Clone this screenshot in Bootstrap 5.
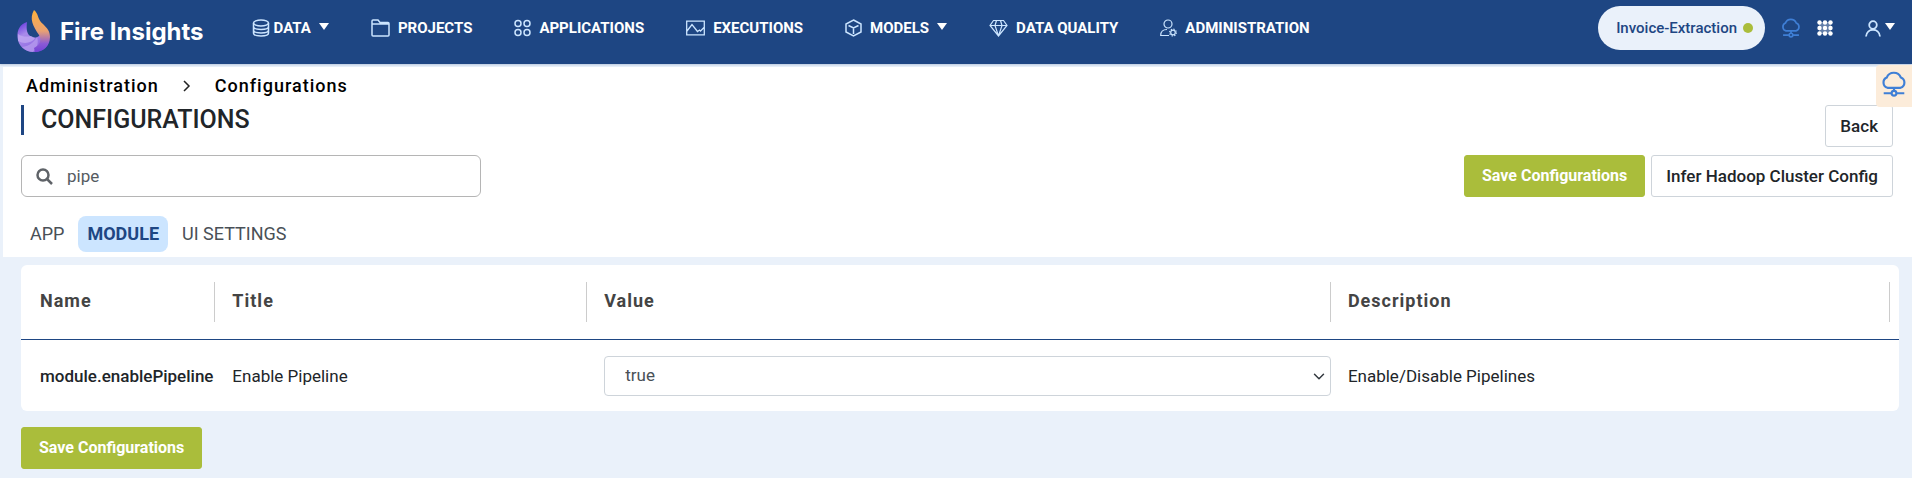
<!DOCTYPE html>
<html lang="en">
<head>
<meta charset="utf-8">
<meta name="viewport" content="width=device-width, initial-scale=1">
<title>Fire Insights - Configurations</title>
<link rel="stylesheet" href="https://cdn.jsdelivr.net/npm/bootstrap@5.3.0/dist/css/bootstrap.min.css">
<style>
  body { background: #eaf1fa; color: #212529; font-family: Roboto, "Liberation Sans", sans-serif; font-size: 17px; line-height: 24px; }
  a { color: inherit; text-decoration: none; }
  .topbar { background: #1e4683; height: 64px; color: #fff; box-shadow: 0 1px 2px rgba(30, 70, 131, .25); }
  .brand-name { font-family: Inter, "Open Sans", sans-serif; font-weight: 700; font-size: 24px; line-height: 32px; }
  .main-menu { gap: 42px; margin-left: 48px; font-size: 15px; font-weight: 700; line-height: 24px; }
  .menu-icon { fill: none; stroke: #cce5ff; flex: none; }
  .caret { width: 0; height: 0; border: 5px solid transparent; border-top: 7px solid #fff; border-bottom: 0; margin-bottom: 4px; }
  .account-tools { margin-right: 17px; }
  .project-pill { height: 44px; border-radius: 22px; background: #eaf1fa; color: #1e4683; font-size: 15px; font-weight: 500; padding: 0 12px 0 18px; border: 0; gap: 6px; }
  .status-dot { width: 10px; height: 10px; background: #aabd3b; }
  .page-head { margin: 3px 0 0 3px; padding: 7px 19px 5px 18px; background: #fff; }
  .crumbs { font-size: 18px; font-weight: 500; letter-spacing: 1px; color: #000; padding-left: 5px; gap: 24px; }
  .page-title { font-size: 25px; line-height: 30px; font-weight: 500; border-left: 3px solid #1e4683; padding-left: 17px; }
  .title-row { margin-top: 7px; height: 42px; }
  .tool-row { margin-top: 8px; }
  .act { height: 42px; border-radius: 3px; font-size: 17px; font-weight: 500; padding: 0 14px; line-height: 24px; }
  .act-save { background: #aabd3b; color: #fff; border-color: #aabd3b; font-weight: 700; font-size: 16px; padding: 0 17px; }
  .act-plain { background: #fff; color: #212529; border-color: #ced4da; }
  .search-box { width: 460px; height: 42px; border: 1px solid #b5b5b5; border-radius: 6px; padding: 0 14px; gap: 14px; }
  .search-box input { border: 0; outline: 0; color: #555b61; flex: 1; font-size: 17px; background: none; padding: 0; }
  .view-tabs { margin-top: 19px; font-size: 18px; color: #495057; gap: 5px; }
  .view-tabs a { padding: 6px 9px; border-radius: 8px; }
  .view-tabs a.current { background: #cce5ff; color: #1e4683; font-weight: 700; }
  .content-area { padding: 8px 13px 9px 18px; margin-left: 3px; }
  .config-card { background: #fff; border-radius: 6px; }
  .config-table { table-layout: fixed; width: 100%; white-space: nowrap; border-collapse: separate; border-spacing: 0; }
  .config-table thead th { padding: 17px 0; border-bottom: 1px solid #1e4683; }
  .head-cell { height: 40px; padding: 7px 0 9px 17px; border-right: 1px solid #ccc; font-size: 18px; font-weight: 700; letter-spacing: 1px; color: #444; }
  .config-table th:first-child .head-cell { padding-left: 19px; }
  .config-table th:last-child .head-cell { margin-right: 9px; }
  .config-table tbody th, .config-table tbody td { padding: 16px 0 15px 17px; text-align: left; font-weight: 400; }
  .config-table tbody th { font-weight: 500; padding-left: 19px; }
  .config-table .value-select { height: 40px; border: 1px solid #ced4da; border-radius: 4px; font-size: 17px; color: #495057; padding: 0 20px; background-position: right 5px center; background-size: 12px 13px; }
  .cloud-tab { position: absolute; top: 65px; right: 0; width: 36px; height: 42px; background: #fcecda; border: 0; border-radius: 4px 0 0 4px; }
</style>
</head>
<body>
<svg class="d-none" aria-hidden="true">
  <symbol id="cloud" viewBox="0 0 24 24">
    <path d="M6 15.500a5 5 0 0 1-.7-9.400A7 7 0 0 1 18.300 6a5 5 0 0 1-.3 9.500zM12 15.500v3M2.500 20.500h7M14.500 20.500h7"/>
    <circle cx="12" cy="20.500" r="2.200"/>
  </symbol>
</svg>

<header class="topbar d-flex align-items-center position-relative">
  <a href="#" class="d-flex align-items-center ms-3 text-white">
    <svg width="36" height="44" viewBox="0 0 36 44">
      <defs>
        <linearGradient id="flame" x1="0" y1="0" x2="0" y2="1"><stop offset="0" stop-color="#ffb13b"/><stop offset=".5" stop-color="#e9a173"/><stop offset=".8" stop-color="#8b5ad6"/><stop offset="1" stop-color="#7342d8"/></linearGradient>
        <linearGradient id="swirl" x1="0" y1="0" x2=".6" y2="1"><stop offset="0" stop-color="#5b2bdc"/><stop offset=".4" stop-color="#a98bea"/><stop offset="1" stop-color="#8a63e0"/></linearGradient>
      </defs>
      <path fill="url(#swirl)" d="M11 12C4 14 1 20 1.500 27 2 36 9 42 18 42c7 0 12-4 14-8l-8-9c-3 3-5 3-8 2-5-2-6-7-5-15z"/>
      <path fill="#c3adf2" opacity=".7" d="M2 24c4 3 9 3 13 2l4 2c-2 4-10 7-17 3z"/>
      <path fill="#b9a0f0" opacity=".7" d="M6 37c8-1 12-5 15-10 2 6 0 11-4 15-4 0-8-2-11-5z"/>
      <path fill="url(#flame)" d="M18 0c5 4 3 9 9 14 4 4 7 7 7 13 0 9-7 15-15 15l-1-4c6-3 8-8 5-13-6-9-10-16-5-25z"/>
    </svg>
    <span class="brand-name ms-2">Fire Insights</span>
  </a>

  <nav class="main-menu d-flex align-items-center mb-2" aria-label="Main">
    <a href="#" class="d-flex align-items-center gap-1">
      <svg class="menu-icon" width="18" height="18" viewBox="0 0 18 18" stroke-width="1.500"><ellipse cx="9" cy="4" rx="7.500" ry="3"/><path d="M1.500 4v10c0 4 15 4 15 0V4M1.500 7.500c0 4 15 4 15 0M1.500 11c0 4 15 4 15 0"/></svg>
      DATA <span class="caret ms-1"></span></a>
    <a href="#" class="d-flex align-items-center gap-2">
      <svg class="menu-icon" width="19" height="18" viewBox="0 0 19 18" stroke-width="1.500"><path d="M1 16V2q0-1 1-1h5l2 2.500h8q1 0 1 1V16q0 1-1 1H2q-1 0-1-1zM1 5h17"/></svg>
      PROJECTS</a>
    <a href="#" class="d-flex align-items-center gap-2">
      <svg class="menu-icon" width="17" height="18" viewBox="0 0 17 18" stroke-width="1.500"><circle cx="4" cy="4.500" r="3"/><circle cx="13" cy="4.500" r="3"/><circle cx="4" cy="13.500" r="3"/><circle cx="13" cy="13.500" r="3"/></svg>
      APPLICATIONS</a>
    <a href="#" class="d-flex align-items-center gap-2">
      <svg class="menu-icon" width="19" height="16" viewBox="0 0 19 16" stroke-width="1.300"><path d="M.7 1.200h17.600v13.600H.7zM1 11l5-6.500 5.500 7 2-1.500 1 1 3.500-3.500"/></svg>
      EXECUTIONS</a>
    <a href="#" class="d-flex align-items-center gap-2">
      <svg class="menu-icon" width="17" height="18" viewBox="0 0 17 18" stroke-width="1.500"><path d="M8.500 1 16 5v8l-7.500 4L1 13V5zM3.500 6.500l5 2.500 5-2.500M8.500 9v6"/></svg>
      MODELS <span class="caret"></span></a>
    <a href="#" class="d-flex align-items-center gap-2">
      <svg class="menu-icon" width="19" height="18" viewBox="0 0 19 18" stroke-width="1.200"><path d="M4.500 1.500h10L18 6.500l-8.500 10.500L1 6.500zM1 6.500h17M6 6.500l3.500 10.500 3.500-10.500M6 6.500l1.500-5M13 6.500l-1.500-5"/></svg>
      DATA QUALITY</a>
    <a href="#" class="d-flex align-items-center gap-2">
      <svg class="menu-icon" width="17" height="18" viewBox="0 0 17 18" stroke-width="1.200"><circle cx="8" cy="5" r="4"/><path d="M9 16.500H.7c0-4 2-6 6.300-6"/><circle cx="13" cy="13.500" r="2.300"/><circle cx="13" cy="13.500" r="3.400" stroke-dasharray="1.300 1.370"/></svg>
      ADMINISTRATION</a>
  </nav>

  <div class="account-tools d-flex align-items-center ms-auto mb-2">
    <button type="button" class="project-pill d-flex align-items-center">Invoice-Extraction <span class="status-dot rounded-circle"></span></button>
    <svg class="ms-3" width="20" height="20" fill="none" stroke="#3f7fd6" stroke-width="2"><use href="#cloud"/></svg>
    <svg class="ms-3" width="16" height="16" viewBox="0 0 16 16" fill="#fff"><path opacity=".3" d="M2 2h12v12H2z"/><circle cx="2.500" cy="2.500" r="2.200"/><circle cx="8" cy="2.500" r="2.200"/><circle cx="13.500" cy="2.500" r="2.200"/><circle cx="2.500" cy="8" r="2.200"/><circle cx="8" cy="8" r="2.200"/><circle cx="13.500" cy="8" r="2.200"/><circle cx="2.500" cy="13.500" r="2.200"/><circle cx="8" cy="13.500" r="2.200"/><circle cx="13.500" cy="13.500" r="2.200"/></svg>
    <a href="#" class="d-flex align-items-center gap-1 ms-4 ps-2" aria-label="Account">
      <svg class="menu-icon" width="16" height="17" viewBox="0 0 16 17" stroke-width="1.800"><circle cx="8" cy="5" r="3.800"/><path d="M1 16.500c1-9 13-9 14 0"/></svg>
      <span class="caret"></span></a>
  </div>
  <button type="button" class="cloud-tab d-flex align-items-center justify-content-center p-0" aria-label="Cluster">
    <svg class="mb-1" width="26" height="26" fill="none" stroke="#3f7fd6" stroke-width="2"><use href="#cloud"/></svg>
  </button>
</header>

<main>
  <section class="page-head">
    <nav class="crumbs d-flex align-items-center" aria-label="Breadcrumb">
      <a href="#">Administration</a>
      <svg width="8" height="12" viewBox="0 0 8 12" fill="none" stroke="#222" stroke-width="1.500"><path d="M1 1l5 5-5 5"/></svg>
      <span>Configurations</span>
    </nav>
    <div class="title-row d-flex justify-content-between align-items-start">
      <h1 class="page-title m-0">CONFIGURATIONS</h1>
      <button type="button" class="btn act act-plain">Back</button>
    </div>
    <div class="tool-row d-flex justify-content-between">
      <label class="search-box d-flex align-items-center">
        <svg width="17" height="17" viewBox="0 0 17 17" fill="none" stroke="#5f6368" stroke-width="2.500"><circle cx="7" cy="7" r="5.500"/><path d="M11 11l5 5"/></svg>
        <input type="text" value="pipe" aria-label="Search configurations">
      </label>
      <div class="d-flex" style="gap:6px">
        <button type="button" class="btn act act-save">Save Configurations</button>
        <button type="button" class="btn act act-plain">Infer Hadoop Cluster Config</button>
      </div>
    </div>
    <nav class="view-tabs d-flex" aria-label="Sections">
      <a href="#">APP</a>
      <a href="#" class="current">MODULE</a>
      <a href="#">UI SETTINGS</a>
    </nav>
  </section>

  <section class="content-area">
    <div class="config-card">
      <table class="config-table">
        <colgroup><col style="width:10.350%"><col style="width:19.800%"><col style="width:39.600%"><col></colgroup>
        <thead>
          <tr><th scope="col"><div class="head-cell">Name</div></th><th scope="col"><div class="head-cell">Title</div></th><th scope="col"><div class="head-cell">Value</div></th><th scope="col"><div class="head-cell">Description</div></th></tr>
        </thead>
        <tbody>
          <tr>
            <th scope="row">module.enablePipeline</th>
            <td>Enable Pipeline</td>
            <td><select class="form-select value-select" aria-label="module.enablePipeline"><option selected>true</option><option>false</option></select></td>
            <td>Enable/Disable Pipelines</td>
          </tr>
        </tbody>
      </table>
    </div>
    <button type="button" class="btn act act-save mt-3">Save Configurations</button>
  </section>
</main>
<script src="https://cdn.jsdelivr.net/npm/bootstrap@5.3.0/dist/js/bootstrap.bundle.min.js"></script>
</body>
</html>
